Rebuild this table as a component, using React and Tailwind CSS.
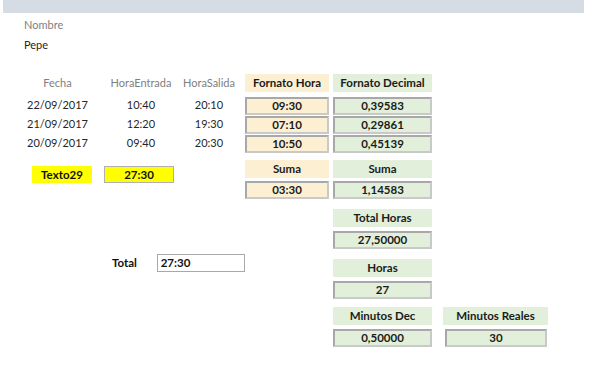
import React from "react";

const font = { fontFamily: "Lato, 'Open Sans', sans-serif" };

const rows = [
  { fecha: "22/09/2017", entrada: "10:40", salida: "20:10", hora: "09:30", dec: "0,39583" },
  { fecha: "21/09/2017", entrada: "12:20", salida: "19:30", hora: "07:10", dec: "0,29861" },
  { fecha: "20/09/2017", entrada: "09:40", salida: "20:30", hora: "10:50", dec: "0,45139" },
];

function Label({ tone, children, className = "" }) {
  const bg = tone === "cream" ? "bg-[#fdf0d2]" : "bg-[#e2efda]";
  return (
    <div
      className={`h-[18px] flex items-center justify-center text-[11.5px] font-bold text-[#1b1b1b] ${bg} ${className}`}
    >
      {children}
    </div>
  );
}

function Cell({ tone, children, className = "" }) {
  const bg = tone === "cream" ? "bg-[#fdf0d2]" : "bg-[#e2efda]";
  return (
    <div
      className={`h-[18px] flex items-center justify-center text-[11.5px] font-bold text-[#1b1b1b] border-2 border-t-[#a8a8a8] border-l-[#a8a8a8] border-r-[#c9c9c9] border-b-[#c9c9c9] ${bg} ${className}`}
    >
      {children}
    </div>
  );
}

export default function App() {
  return (
    <div className="w-[600px] h-[374px] bg-white overflow-hidden" style={font}>
      <div className="ml-[3px] w-[581px] h-[13px] bg-[#d6dce4]" />

      <div className="pl-[24px] pt-[4px] text-[11px]">
        <div className="h-[15px] leading-[15px] text-[#808080]">Nombre</div>
        <div className="mt-[5px] h-[15px] leading-[15px] text-[#262626]">Pepe</div>
      </div>

      <div className="mt-[22px] flex items-start">
        {/* Registro de fechas y horas */}
        <div className="w-[245px] text-[11px]">
          <div className="h-[18px] flex items-center text-[#808080]">
            <div className="ml-[20px] w-[75px] text-center">Fecha</div>
            <div className="ml-[5px] w-[82px] text-center">HoraEntrada</div>
            <div className="w-[54px] text-center">HoraSalida</div>
          </div>
          <div className="mt-[4px]">
            {rows.map((r) => (
              <div key={r.fecha} className="h-[19px] flex items-center text-[#262626]">
                <div className="ml-[20px] w-[75px] text-center">{r.fecha}</div>
                <div className="ml-[5px] w-[82px] text-center">{r.entrada}</div>
                <div className="w-[54px] text-center">{r.salida}</div>
              </div>
            ))}
          </div>
          <div className="mt-[13px] flex items-center text-[11.5px] font-bold text-[#111]">
            <div className="ml-[32px] w-[60px] h-[17px] bg-[#ffff00] flex items-center justify-center">
              Texto29
            </div>
            <div className="ml-[12px] w-[70px] h-[17px] bg-[#ffff00] border border-[#b0b0b0] flex items-center justify-center">
              27:30
            </div>
          </div>
          <div className="mt-[71px] flex items-center text-[11.5px] font-bold text-[#111]">
            <div className="ml-[112px] w-[45px]">Total</div>
            <div className="w-[89px] h-[18px] border border-[#a8a8a8] flex items-center pl-[3px]">
              27:30
            </div>
          </div>
        </div>

        {/* Formato hora */}
        <div className="w-[84px] flex flex-col">
          <Label tone="cream">Fornato Hora</Label>
          <div className="mt-[5px] flex flex-col gap-[1px]">
            {rows.map((r) => (
              <Cell key={r.hora} tone="cream">{r.hora}</Cell>
            ))}
          </div>
          <Label tone="cream" className="mt-[7px]">Suma</Label>
          <Cell tone="cream" className="mt-[3px]">03:30</Cell>
        </div>

        {/* Formato decimal */}
        <div className="ml-[4px] w-[99px] flex flex-col">
          <Label tone="green">Fornato Decimal</Label>
          <div className="mt-[5px] flex flex-col gap-[1px]">
            {rows.map((r) => (
              <Cell key={r.dec} tone="green">{r.dec}</Cell>
            ))}
          </div>
          <Label tone="green" className="mt-[7px]">Suma</Label>
          <Cell tone="green" className="mt-[3px]">1,14583</Cell>
          <Label tone="green" className="mt-[10px]">Total Horas</Label>
          <Cell tone="green" className="mt-[4px]">27,50000</Cell>
          <Label tone="green" className="mt-[10px]">Horas</Label>
          <Cell tone="green" className="mt-[4px]">27</Cell>
          <Label tone="green" className="mt-[8px]">Minutos Dec</Label>
          <Cell tone="green" className="mt-[4px]">0,50000</Cell>
        </div>

        {/* Minutos reales */}
        <div className="ml-[11px] mt-[233px] w-[105px] flex flex-col">
          <Label tone="green">Minutos Reales</Label>
          <Cell tone="green" className="mt-[4px] ml-[2px] w-[102px]">30</Cell>
        </div>
      </div>
    </div>
  );
}
